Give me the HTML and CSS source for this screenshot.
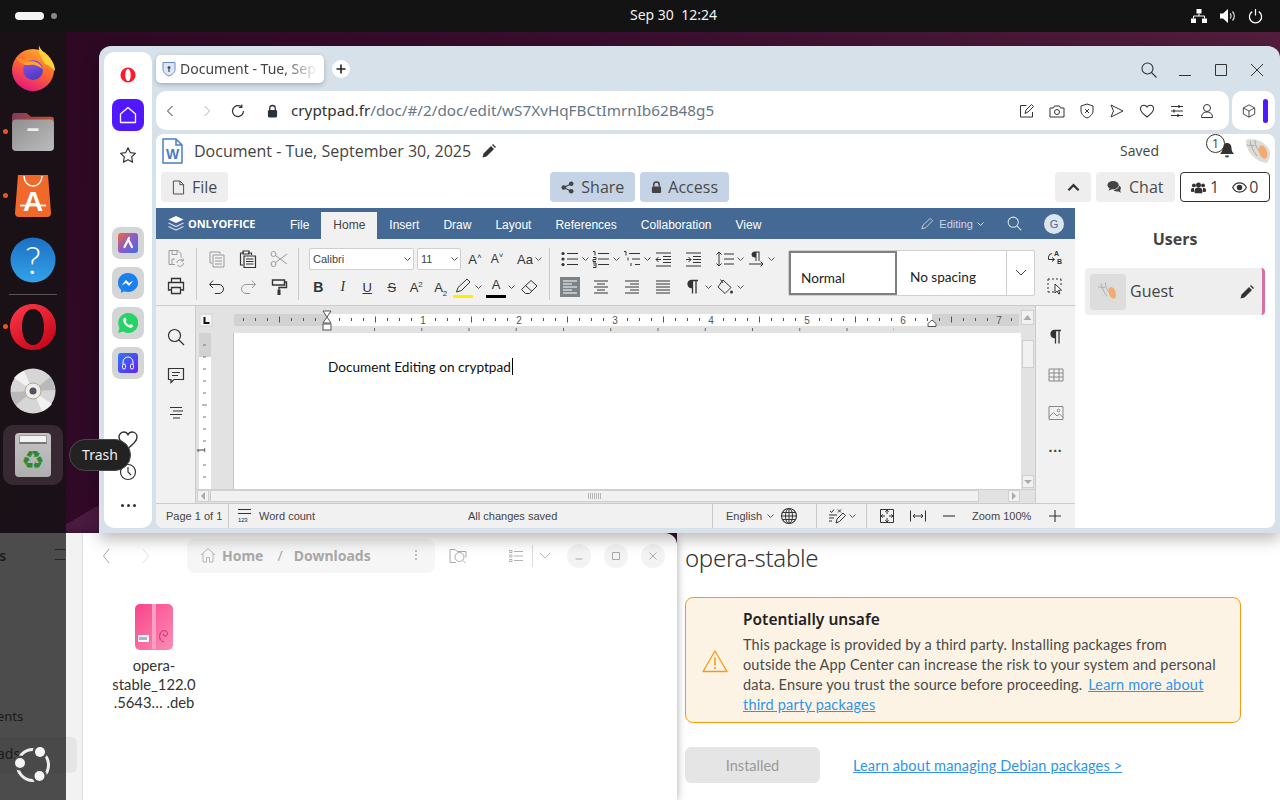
FILE: index.html
```html
<!DOCTYPE html>
<html lang="en">
<head>
<meta charset="utf-8">
<title>Desktop</title>
<link rel="stylesheet" href="styles.css">
</head>
<body>
<svg class="defs" width="0" height="0" aria-hidden="true">
  <defs>
    <linearGradient id="ffBase" x1="0.8" y1="0" x2="0.3" y2="1"><stop offset="0" stop-color="#ffb52e"/><stop offset=".45" stop-color="#ff6a2e"/><stop offset="1" stop-color="#e5157f"/></linearGradient>
    <linearGradient id="ffBall" x1="0.3" y1="0" x2="0.7" y2="1"><stop offset="0" stop-color="#9a4fe0"/><stop offset="1" stop-color="#3f3bc4"/></linearGradient>
    <linearGradient id="folderB" x1="0" y1="0" x2="1" y2="0"><stop offset="0" stop-color="#7f3a5c"/><stop offset="1" stop-color="#c9532a"/></linearGradient>
    <linearGradient id="folderF" x1="0" y1="0" x2="1" y2="1"><stop offset="0" stop-color="#8f8f8f"/><stop offset="1" stop-color="#bcbcbc"/></linearGradient>
    <linearGradient id="helpG" x1="0" y1="0" x2="0" y2="1"><stop offset="0" stop-color="#1d6fc4"/><stop offset="1" stop-color="#32a3e8"/></linearGradient>
    <linearGradient id="opG" x1="0" y1="0" x2="0.6" y2="1"><stop offset="0" stop-color="#ff3b4a"/><stop offset="1" stop-color="#c8081c"/></linearGradient>
    <linearGradient id="debG" x1="0" y1="0" x2="1" y2="1"><stop offset="0" stop-color="#f8448a"/><stop offset="1" stop-color="#fb8db5"/></linearGradient>
    <linearGradient id="aiG" x1="0" y1="0" x2="1" y2="1"><stop offset="0" stop-color="#f0683a"/><stop offset=".5" stop-color="#8c5bc8"/><stop offset="1" stop-color="#3c6fe0"/></linearGradient>
    <linearGradient id="musG" x1="0" y1="0" x2="1" y2="1"><stop offset="0" stop-color="#2d7bf5"/><stop offset="1" stop-color="#6a1ff0"/></linearGradient>
    <symbol id="chev" viewBox="0 0 11 22"><path d="M2.500 9.500 5.500 12.500 8.500 9.500" fill="none" stroke="currentColor" stroke-width="1"/></symbol>
    <symbol id="save" viewBox="0 0 20 20"><path d="M3 2.500h9l3 3v4M3 2.500v14h6M6 2.500v4h5v-4M6 16v-5h3" fill="none" stroke="currentColor"/><path d="M11 15a3.500 3.500 0 0 1 6-2.300M17.500 15a3.500 3.500 0 0 1-6 2.300M17.300 10.500v2.500h-2.500" fill="none" stroke="currentColor"/></symbol>
    <symbol id="print" viewBox="0 0 20 20"><path d="M5.500 6V2.500h9V6M5.500 14h-3V6.500h15V14h-3M5.500 11.500h9v6h-9z" fill="none" stroke="currentColor" stroke-width="1.300"/></symbol>
    <symbol id="copy" viewBox="0 0 20 20"><path d="M3 3h10v2M3 3v11h2M6 6h11v12H6zM8 9h7M8 12h7M8 15h7" fill="none" stroke="currentColor"/></symbol>
    <symbol id="paste" viewBox="0 0 20 20"><path d="M6 4H2.500v12H5M10 4h3.500v2M5 2h6v3H5zM6 7h11.500v11.500H6zM8 10h7.500M8 12.500h7.500M8 15h7.500" fill="none" stroke="currentColor" stroke-width="1.200"/></symbol>
    <symbol id="cut" viewBox="0 0 20 20"><circle cx="4.500" cy="5" r="2.500" fill="none" stroke="currentColor"/><circle cx="4.500" cy="15" r="2.500" fill="none" stroke="currentColor"/><path d="M6.500 6.500 18 15M6.500 13.500 18 5" fill="none" stroke="currentColor"/></symbol>
    <symbol id="undo" viewBox="0 0 20 20"><path d="M6 3.500 2.500 7.500 6 11M3 7.500h9a4.500 4.500 0 0 1 0 9H8" fill="none" stroke="currentColor"/></symbol>
    <symbol id="redo" viewBox="0 0 20 20"><path d="M14 3.500 17.500 7.500 14 11M17 7.500H8a4.500 4.500 0 0 0 0 9h4" fill="none" stroke="currentColor"/></symbol>
    <symbol id="roller" viewBox="0 0 20 20"><path d="M3.500 3h12v5h-12zM15.500 5h2v5.500H10v2" fill="none" stroke="currentColor" stroke-width="1.400"/><path d="M8.500 12.500h3V18h-3z" fill="currentColor"/></symbol>
    <symbol id="ul" viewBox="0 0 20 20"><g stroke="currentColor"><path d="M7 4.500h11M7 10h11M7 15.500h11"/></g><circle cx="3" cy="4.500" r="1.600" fill="currentColor"/><circle cx="3" cy="10" r="1.600" fill="currentColor"/><circle cx="3" cy="15.500" r="1.600" fill="currentColor"/></symbol>
    <symbol id="ol" viewBox="0 0 20 20"><path d="M7 4.500h11M7 10h11M7 15.500h11M2 2.500h2v4M2 8.500h3v2H2v2h3M2 14h3v4.500H2M2.500 16h2" fill="none" stroke="currentColor"/></symbol>
    <symbol id="ml" viewBox="0 0 20 20"><path d="M7 4.500h11M10 10h8M13 15.500h5M2 2.500h2v4M6 8.500v3M9 14v3" fill="none" stroke="currentColor"/></symbol>
    <symbol id="ind1" viewBox="0 0 20 20"><path d="M3 4h15M10 7.500h8M10 10.500h8M10 13.500h8M3 17h15M8 10.500H3M5.500 8 3 10.500 5.500 13" fill="none" stroke="currentColor"/></symbol>
    <symbol id="ind2" viewBox="0 0 20 20"><path d="M3 4h15M10 7.500h8M10 10.500h8M10 13.500h8M3 17h15M3 10.500h5M5.500 8 8 10.500 5.500 13" fill="none" stroke="currentColor"/></symbol>
    <symbol id="ls" viewBox="0 0 20 20"><path d="M4 3v14M1.500 5.500 4 3l2.500 2.500M1.500 14.500 4 17l2.500-2.500M9 5h10M9 10h10M9 15h10" fill="none" stroke="currentColor"/></symbol>
    <symbol id="pdir" viewBox="0 0 20 20"><path d="M10 3v9M13 3v9M13.500 3H8.500a2.500 2.500 0 0 0 0 5H10" fill="none" stroke="currentColor"/><path d="M8.500 3a2.500 2.500 0 0 0 0 5H10V3z" fill="currentColor"/><path d="M3 15h14M14.500 12.500 17 15l-2.500 2.500" fill="none" stroke="currentColor"/></symbol>
    <symbol id="al" viewBox="0 0 20 20"><path d="M3 4h14M3 7h9M3 10h14M3 13h9M3 16h14" fill="none" stroke="currentColor"/></symbol>
    <symbol id="ac" viewBox="0 0 20 20"><path d="M3 4h14M6 7h8M3 10h14M6 13h8M3 16h14" fill="none" stroke="currentColor"/></symbol>
    <symbol id="ar" viewBox="0 0 20 20"><path d="M3 4h14M8 7h9M3 10h14M8 13h9M3 16h14" fill="none" stroke="currentColor"/></symbol>
    <symbol id="aj" viewBox="0 0 20 20"><path d="M3 4h14M3 7h14M3 10h14M3 13h14M3 16h14" fill="none" stroke="currentColor"/></symbol>
    <symbol id="pil" viewBox="0 0 20 20"><path d="M9.500 3.500v13M13 3.500v13M15 3.500H8.500a3.500 3.500 0 0 0 0 7h1" fill="none" stroke="currentColor" stroke-width="1.300"/><path d="M8.500 3.500a3.500 3.500 0 0 0 0 7h1v-7z" fill="currentColor"/></symbol>
    <symbol id="fill" viewBox="0 0 20 20"><path d="M8 3 16 10.500 10 16.500 3 10z" fill="none" stroke="currentColor"/><path d="M5.500 2.500 8 6" fill="none" stroke="currentColor"/><circle cx="16.500" cy="15" r="1.500" fill="currentColor"/></symbol>
    <symbol id="eraser" viewBox="0 0 20 20"><path d="M12 3.500 18 9 10.500 16.500H6.500L2.500 12.500zM6.500 8.500l6.500 6" fill="none" stroke="currentColor"/></symbol>
    <symbol id="pen" viewBox="0 0 20 20"><path d="M3.500 16 5 11.500 14 3l3 3-8.500 8.500z" fill="none" stroke="currentColor"/></symbol>
    <symbol id="replace" viewBox="0 0 20 20"><path d="M7 5.500a4 4 0 0 0-3.500 3.500v2.500h6M7 9.500l2.500 2-2.500 2" fill="none" stroke="currentColor"/><text x="9" y="7.500" class="sm-l">A</text><text x="12" y="16" class="sm-l">B</text></symbol>
    <symbol id="sel" viewBox="0 0 20 20"><path d="M3 3h13M3 3v13M3 16h6M16 3v6" fill="none" stroke="currentColor" stroke-dasharray="2 2"/><path d="M10 8v9l2.200-2 1.500 3 1.300-.6-1.500-3 3-.3z" fill="#fff" stroke="currentColor"/></symbol>
    <symbol id="search" viewBox="0 0 20 20"><circle cx="8.500" cy="8.500" r="6" fill="none" stroke="currentColor" stroke-width="1.200"/><path d="M13 13l5 5" stroke="currentColor" stroke-width="1.200"/></symbol>
    <symbol id="comment" viewBox="0 0 20 20"><path d="M2.500 3.500h15v11H8L5 17.500v-3H2.500zM6 7.500h8M6 10.500h6" fill="none" stroke="currentColor" stroke-width="1.200"/></symbol>
    <symbol id="nav" viewBox="0 0 20 20"><path d="M4 4.500h12M7 8h10M4 11.500h12M7 15h7" fill="none" stroke="currentColor" stroke-width="1.200"/></symbol>
    <symbol id="table" viewBox="0 0 20 20"><path d="M3 4h14v12H3zM3 8h14M3 12h14M8 4v12M13 4v12" fill="none" stroke="currentColor"/></symbol>
    <symbol id="image" viewBox="0 0 20 20"><path d="M3 3.500h14v13H3zM3 14l4.500-4.500 3.500 3.500 2.500-2 3.500 3.500" fill="none" stroke="currentColor"/><circle cx="12.500" cy="7.500" r="1.300" fill="none" stroke="currentColor"/></symbol>
    <symbol id="heart" viewBox="0 0 20 20"><path d="M10 17.500C4.500 13.500 1.800 10.700 1.800 7.300 1.800 4.600 3.900 2.800 6.200 2.800c1.600 0 3 .8 3.800 2.300.8-1.500 2.200-2.300 3.800-2.300 2.300 0 4.400 1.800 4.400 4.500 0 3.400-2.700 6.200-8.200 10.200z" fill="none" stroke="#333" stroke-width="1.300"/></symbol>
    <symbol id="globe" viewBox="0 0 20 20"><circle cx="10" cy="10" r="7.500" fill="none" stroke="currentColor" stroke-width="1.100"/><ellipse cx="10" cy="10" rx="3.500" ry="7.500" fill="none" stroke="currentColor"/><path d="M2.500 10h15M3.500 6.500h13M3.500 13.500h13M10 2.500v15" fill="none" stroke="currentColor"/></symbol>
    <symbol id="track" viewBox="0 0 20 20"><path d="M2 9h8M2 12h5M2 15h3M3 5l1.500 1.500L7 3.500M11 3.500l3 3M14 3.500l-3 3M9 17l1-4 6-6 2.500 2.500-6 6z" fill="none" stroke="currentColor"/></symbol>
    <symbol id="fit" viewBox="0 0 20 20"><path d="M3.500 3.500h13v13h-13zM10 4v4M8.300 5.700 10 4l1.700 1.700M10 16v-4M8.300 14.300 10 16l1.700-1.700M4 10h4M5.700 8.300 4 10l1.700 1.700M16 10h-4M14.300 8.300 16 10l-1.700 1.700" fill="none" stroke="currentColor"/></symbol>
    <symbol id="fitw" viewBox="0 0 20 20"><path d="M2.500 4.500v11M17.500 4.500v11M5 10h10M7 8l-2 2 2 2M13 8l2 2-2 2" fill="none" stroke="currentColor"/></symbol>
    <symbol id="minus" viewBox="0 0 20 20"><path d="M4 10h12" stroke="currentColor" stroke-width="1.100"/></symbol>
    <symbol id="plus" viewBox="0 0 20 20"><path d="M4 10h12M10 4v12" stroke="currentColor" stroke-width="1.100"/></symbol>
    <symbol id="shell" viewBox="0 0 28 28"><path d="M2 3C8 0 20 3 25 12c2 5 1 10-2 14-5 0-13-4-17-10C3 12 2 7 2 3z" fill="#dcdcd8"/><path d="M6 4c1 5 3 10 7 15M11 3c0 5 2 9 5 12M2.500 8c3 .5 5 1 8 .5" fill="none" stroke="#a8aaa6"/><ellipse cx="19" cy="15" rx="4" ry="7" transform="rotate(-20 19 15)" fill="#f4ab72"/></symbol>
  </defs>
</svg>

<header class="topbar">
  <div class="activities"><span class="pill"></span><span class="wsdot"></span></div>
  <div class="clock">Sep 30&nbsp;&nbsp;12:24</div>
  <div class="tray">
    <svg class="tray-net" viewBox="0 0 16 14" width="16" height="14"><path d="M5.500 0h5v4.500h-5zM0 9.500h5V14H0zM11 9.500h5V14h-5z" fill="#fff"/><path d="M8 4.500v2.500M2.500 9.500V7h11v2.500" fill="none" stroke="#fff"/></svg>
    <svg class="tray-vol" viewBox="0 0 16 14" width="16" height="14"><path d="M0 4.500h3L8 0v14L3 9.500H0z" fill="#fff"/><path d="M10 4.500a3.500 3.500 0 0 1 0 5M12.500 2.500a6.500 6.500 0 0 1 0 9" fill="none" stroke="#ddd" stroke-width="1.200"/></svg>
    <svg class="tray-pow" viewBox="0 0 16 16" width="15" height="15"><path d="M4.500 2.800a6.500 6.500 0 1 0 7 0M8 0v7" fill="none" stroke="#fff" stroke-width="1.300"/></svg>
  </div>
</header>

<main class="desktop">
  <!-- App Center -->
  <section class="appcenter">
    <h1 class="ac-title">opera-stable</h1>
    <div class="warning">
      <svg class="warn-icon" viewBox="0 0 26 24" width="26" height="24"><path d="M13 2 1 22.500h24z" fill="none" stroke="#f99b11" stroke-width="1.300" stroke-linejoin="round"/><path d="M13 8.500v8M13 18v2" stroke="#f99b11" stroke-width="1.600"/></svg>
      <div class="warn-body">
        <h2 class="warn-title">Potentially unsafe</h2>
        <p class="warn-text">This package is provided by a third party. Installing packages from<br>outside the App Center can increase the risk to your system and personal<br>data. Ensure you trust the source before proceeding. <a class="lnk lnk-in">Learn more about<br>third party packages</a></p>
      </div>
    </div>
    <div class="ac-actions">
      <button class="installed">Installed</button>
      <a class="lnk ac-link">Learn about managing Debian packages &gt;</a>
    </div>
  </section>

  <!-- Files -->
  <section class="files">
    <aside class="f-side">
      <div class="f-side-top"><span class="f-es">es</span><span class="f-burger"></span></div>
      <div class="f-side-ents">ents</div>
      <div class="f-side-sel">ads</div>
    </aside>
    <div class="f-main">
      <div class="f-head">
        <svg class="f-back" viewBox="0 0 8 16" width="8" height="16"><path d="M7 1 1.500 8 7 15" fill="none" stroke="#a5a5a5"/></svg>
        <svg class="f-fwd" viewBox="0 0 8 16" width="8" height="16"><path d="M1 1 6.500 8 1 15" fill="none" stroke="#e3e3e3"/></svg>
        <div class="f-path">
          <svg viewBox="0 0 16 16" width="16" height="16"><path d="M1 8 8 1.500 15 8M3 6.500V15h3.500v-4.500h3V15H13V6.500" fill="none" stroke="#b4b4b4"/></svg>
          <span class="f-home">Home</span><span class="f-slash">/</span><span class="f-dl">Downloads</span>
          <span class="f-kebab"></span>
        </div>
        <svg class="f-find" viewBox="0 0 18 16" width="18" height="16"><path d="M1 14.500V1.500h5l2 2h9v6M7 14.500H1" fill="none" stroke="#a9a9a9"/><circle cx="10.500" cy="9" r="4.500" fill="none" stroke="#a9a9a9"/><path d="m14 12.500 2.500 2.500" stroke="#a9a9a9"/></svg>
        <svg class="f-list" viewBox="0 0 14 12" width="14" height="12"><path d="M0 .5h3v2H0zM0 5h3v2H0zM0 9.500h3v2H0zM5 1.500h9M5 6h9M5 10.500h9" fill="none" stroke="#b4b4b4"/></svg>
        <span class="f-sep"></span>
        <svg class="f-dd" viewBox="0 0 12 8" width="12" height="8"><path d="M1 1l5 5 5-5" fill="none" stroke="#b4b4b4"/></svg>
        <span class="f-wbtn"><svg viewBox="0 0 10 10" width="10" height="10"><path d="M1.500 8h7" stroke="#aaa"/></svg></span>
        <span class="f-wbtn"><svg viewBox="0 0 10 10" width="10" height="10"><path d="M1.500 1.500h7v7h-7z" fill="none" stroke="#aaa"/></svg></span>
        <span class="f-wbtn"><svg viewBox="0 0 10 10" width="10" height="10"><path d="M1.500 1.500l7 7M8.500 1.500l-7 7" stroke="#aaa"/></svg></span>
      </div>
      <figure class="f-file">
        <svg viewBox="0 0 38 46" width="38" height="46"><rect x="0" y="0" width="38" height="46" rx="5" fill="url(#debG)"/><rect x="17" y="0" width="4" height="45" fill="#fba0c2"/><rect x="3" y="31" width="11" height="7" fill="#fff"/><path d="M5 33v3M7 33v3M9 33v3M11 33v3" stroke="#666"/><path d="M29 38c-4-1-5-4-4-8 1-3 4-4 6-3 2 1 2 4 0 5-1.500.5-3-.5-2.500-2" fill="none" stroke="#d8256b"/></svg>
        <figcaption>opera-<br>stable_122.0<br>.5643… .deb</figcaption>
      </figure>
    </div>
  </section>

  <!-- Opera window -->
  <section class="opera">
    <nav class="op-side">
      <svg class="op-logo" viewBox="0 0 18 18" width="16" height="16"><path fill-rule="evenodd" d="M9 .5a8.500 8.500 0 1 0 0 17 8.500 8.500 0 0 0 0-17zM9 2.200c-2 0-3 3-3 6.800s1 6.800 3 6.800 3-3 3-6.800-1-6.800-3-6.800z" fill="#ff1b2d"/></svg>
      <span class="op-home"><svg viewBox="0 0 20 20" width="20" height="20"><path d="M10 2.500 17.500 9v8.500h-15V9z" fill="none" stroke="#fff" stroke-width="1.300" stroke-linejoin="round"/></svg></span>
      <svg class="op-star" viewBox="0 0 20 20" width="18" height="18"><path d="m10 2 2.500 5.300 5.700.8-4.100 4 1 5.800-5.100-2.700-5.100 2.700 1-5.800-4.100-4 5.700-.8z" fill="none" stroke="#333" stroke-width="1.300" stroke-linejoin="round"/></svg>
      <span class="op-tile first"><svg viewBox="0 0 20 20" width="20" height="20"><rect width="20" height="20" rx="3" fill="url(#aiG)"/><path d="M11 5 6.500 14M11 8l3 6" stroke="#fff" stroke-width="2.200" stroke-linecap="round"/></svg></span>
      <span class="op-tile"><svg viewBox="0 0 20 20" width="20" height="20"><path d="M10 0C4.400 0 0 4.200 0 9.700c0 2.900 1.200 5.400 3.100 7.100V20l3-1.700c1.200.4 2.500.6 3.900.6 5.600 0 10-4 10-9.200C20 4.200 15.600 0 10 0z" fill="#1b7ff0"/><path d="m3.500 12.500 4.500-5.500 3 3 4.500-2.500-4.500 5.500-3-3z" fill="#fff"/></svg></span>
      <span class="op-tile"><svg viewBox="0 0 20 20" width="20" height="20"><path d="M10 0a10 10 0 0 0-8.500 15L0 20l5.200-1.400A10 10 0 1 0 10 0z" fill="#25d366"/><path d="M6 5c1-1 1.700-.5 2.200 1l.3 1c0 .5-.8 1-.8 1.500.5 1.500 2 3 3.500 3.500.5 0 1-.8 1.500-.8l1 .4c1.500.5 2 1.200 1 2.200-1.500 1.500-4.500 1-7-1.500S4.500 6.500 6 5z" fill="#fff"/></svg></span>
      <span class="op-tile"><svg viewBox="0 0 20 20" width="20" height="20"><rect width="20" height="20" rx="3" fill="url(#musG)"/><path d="M5 11V9a5 5 0 0 1 10 0v2" fill="none" stroke="#fff"/><rect x="4.500" y="11" width="3" height="5" rx="1.500" fill="none" stroke="#fff"/><rect x="12.500" y="11" width="3" height="5" rx="1.500" fill="none" stroke="#fff"/></svg></span>
      <svg class="op-heart"><use href="#heart"/></svg>
      <svg class="op-clock" viewBox="0 0 18 18" width="18" height="18"><circle cx="9" cy="9" r="7.500" fill="none" stroke="#333" stroke-width="1.200"/><path d="M9 4v5l3 3" fill="none" stroke="#333" stroke-width="1.200"/></svg>
      <span class="op-more"></span>
    </nav>
    <div class="op-main">
      <div class="tabbar">
        <div class="tab">
          <svg viewBox="0 0 14 16" width="14" height="16"><path d="M1 1.500h12v7c0 3-3 5.500-6 6.500-3-1-6-3.500-6-6.500z" fill="#dce6f5" stroke="#6a8ac8"/><circle cx="7" cy="6.500" r="1.500" fill="#456"/><path d="M7 7v4" stroke="#456" stroke-width="1.300"/></svg>
          <span class="tab-title">Document - Tue, September 30, 2025</span>
        </div>
        <span class="tab-plus"><svg viewBox="0 0 10 10" width="10" height="10"><path d="M5 0.500v9M0.500 5h9" stroke="#222" stroke-width="1.600"/></svg></span>
        <div class="winctl">
          <svg class="wc" viewBox="0 0 16 16" width="16" height="16"><circle cx="6.500" cy="6.500" r="5.500" fill="none" stroke="#333" stroke-width="1.100"/><path d="m10.500 10.500 5 5" stroke="#333" stroke-width="1.100"/></svg>
          <svg class="wc" viewBox="0 0 16 16" width="16" height="16"><path d="M2 13.500h12" stroke="#333"/></svg>
          <svg class="wc" viewBox="0 0 16 16" width="16" height="16"><path d="M2.500 2.500h11v11h-11z" fill="none" stroke="#333"/></svg>
          <svg class="wc" viewBox="0 0 16 16" width="16" height="16"><path d="m2 2 12 12M14 2 2 14" stroke="#333"/></svg>
        </div>
      </div>
      <div class="addrrow">
        <div class="addr">
          <svg class="nav-back" viewBox="0 0 8 12" width="8" height="12"><path d="M6.500 1 1.500 6l5 5" fill="none" stroke="#333"/></svg>
          <svg class="nav-fwd" viewBox="0 0 8 12" width="8" height="12"><path d="M1.500 1l5 5-5 5" fill="none" stroke="#b5b5b5"/></svg>
          <svg class="nav-rel" viewBox="0 0 14 14" width="14" height="14"><path d="M12.500 7A5.500 5.500 0 1 1 10.500 2.800M10.800 0.500v3h-3" fill="none" stroke="#333" stroke-width="1.200"/></svg>
          <svg class="nav-lock" viewBox="0 0 12 14" width="11" height="14"><path d="M3 6V4a3 3 0 0 1 6 0v2" fill="none" stroke="#29323c" stroke-width="1.400"/><rect x="1" y="6" width="10" height="8" rx="1.500" fill="#29323c"/></svg>
          <span class="url"><span class="url-host">cryptpad.fr</span>/doc/#/2/doc/edit/wS7XvHqFBCtImrnIb62B48g5</span>
          <div class="addr-icons">
            <svg viewBox="0 0 16 16"><path d="M13.500 9v5h-12V2.500h6M6 10.500 7 7l5.500-5.500 2 2L9 9z" fill="none" stroke="#333"/></svg>
            <svg viewBox="0 0 16 16"><path d="M1 5h3.500l1-2h5l1 2H15v9H1z" fill="none" stroke="#333" stroke-linejoin="round"/><circle cx="8" cy="9" r="2.500" fill="none" stroke="#333"/></svg>
            <svg viewBox="0 0 16 16"><path d="M8 1l6 2v5c0 3-3 6-6 7-3-1-6-4-6-7V3z" fill="none" stroke="#333"/><path d="m6 6 4 4M10 6l-4 4" stroke="#333"/></svg>
            <svg viewBox="0 0 16 16"><path d="M2 2l12 6-12 6 2.500-6z" fill="none" stroke="#333" stroke-linejoin="round"/></svg>
            <svg viewBox="0 0 20 20"><use href="#heart"/></svg>
            <svg viewBox="0 0 16 16"><path d="M2 3.500h12M2 8h12M2 12.500h12" stroke="#333"/><path d="M10 2v3M5 6.500v3M9 11v3" stroke="#333" stroke-width="1.300"/></svg>
            <svg viewBox="0 0 16 16"><circle cx="8" cy="5" r="3.500" fill="none" stroke="#333"/><path d="M2.500 14.500c0-4 2.500-5.500 5.500-5.500s5.500 1.500 5.500 5.500z" fill="none" stroke="#333"/></svg>
          </div>
        </div>
        <div class="extbox">
          <svg viewBox="0 0 16 16" width="14" height="14"><path d="M8 1l6.500 3.500v7L8 15l-6.500-3.500v-7zM1.500 4.500 8 8l6.500-3.500M8 8v7" fill="none" stroke="#333" stroke-linejoin="round"/></svg>
          <span class="extbar"></span>
        </div>
      </div>

      <div class="page">
        <div class="cp-title">
          <svg class="cp-doc" viewBox="0 0 21 26" width="21" height="26"><path d="M1 1h13l6 6v18H1z" fill="#fff" stroke="#4a7cc4" stroke-width="1.500" stroke-linejoin="round"/><path d="M14 1v6h6" fill="none" stroke="#4a7cc4" stroke-width="1.500"/><text x="10.500" y="21" text-anchor="middle" class="cp-w">W</text></svg>
          <span class="cp-name">Document - Tue, September 30, 2025</span>
          <svg class="cp-pencil" viewBox="0 0 14 14" width="14" height="14"><path d="M0.500 13.500 1.500 9.500 9 2l3 3-7.500 7.500zM10 1l1-1 3 3-1 1z" fill="#333"/></svg>
          <span class="cp-saved">Saved</span>
          <span class="cp-bell">
            <svg viewBox="0 0 16 16" width="16" height="16"><path d="M8 1c3 0 4.500 2.500 4.500 5 0 3 1 4.500 2.500 6H1c1.500-1.500 2.500-3 2.500-6C3.500 3.500 5 1 8 1zM6 13.500h4a2 2 0 0 1-4 0z" fill="#333"/></svg>
            <span class="cp-badge">1</span>
          </span>
          <svg class="cp-avatar"><use href="#shell"/></svg>
        </div>
        <div class="cp-tools">
          <button class="btn"><svg viewBox="0 0 14 16" width="13" height="15"><path d="M1.500 1h7l4 4v10h-11zM8.500 1v4h4" fill="none" stroke="#444"/></svg>File</button>
          <button class="btn blue share"><svg viewBox="0 0 14 14" width="13" height="13"><circle cx="11" cy="3" r="2.500" fill="#444"/><circle cx="11" cy="11" r="2.500" fill="#444"/><circle cx="3" cy="7" r="2.500" fill="#444"/><path d="M3 7l8-4M3 7l8 4" stroke="#444" stroke-width="1.300"/></svg>Share</button>
          <button class="btn blue access"><svg viewBox="0 0 12 14" width="11" height="13"><path d="M3 6V4a3 3 0 0 1 6 0v2" fill="none" stroke="#444" stroke-width="1.600"/><rect x="1" y="6" width="10" height="7" rx="1" fill="#444"/></svg>Access</button>
          <button class="btn up"><svg viewBox="0 0 14 9" width="13" height="9"><path d="M1.500 7.500 7 2l5.500 5.500" fill="none" stroke="#333" stroke-width="2.400"/></svg></button>
          <button class="btn chat"><svg viewBox="0 0 16 14" width="15" height="14"><ellipse cx="6.500" cy="5" rx="6" ry="4.500" fill="#444"/><path d="M3 8 1.500 11 6 9z" fill="#444"/><path d="M13 5.500c2 1 2.500 3.500 1 5l.8 2.500-3-1.500c-2 .5-4 0-5-1.500 3 0 6-1.500 6.200-4.500z" fill="#444"/></svg>Chat</button>
          <div class="users">
            <svg viewBox="0 0 18 14" width="15" height="13"><circle cx="9" cy="4" r="3" fill="#333"/><circle cx="3.500" cy="4.500" r="2.300" fill="#333"/><circle cx="14.500" cy="4.500" r="2.300" fill="#333"/><path d="M4.500 14V10c0-2 2-3 4.500-3s4.500 1 4.500 3v4zM0 12V9.500C0 8 1.500 7.500 3.500 7.500l.5 5zM18 12V9.500c0-1.500-1.500-2-3.500-2l-.5 5z" fill="#333"/></svg>
            <span>1</span>
            <svg class="u-eye" viewBox="0 0 16 12" width="15" height="11"><path d="M.5 6C2 3 5 1 8 1s6 2 7.500 5C14 9 11 11 8 11S2 9 .5 6z" fill="none" stroke="#333" stroke-width="1.200"/><circle cx="8" cy="6" r="3" fill="#333"/></svg>
            <span>0</span>
          </div>
        </div>
        <div class="cp-body">
          <div class="oo">
            <div class="oo-head">
              <svg class="oo-logo" viewBox="0 0 16 15" width="16" height="15"><path d="M8 0l7.500 3.500L8 7 .5 3.500z" fill="#fff"/><path d="M.5 7 8 10.500 15.500 7M.5 10.500 8 14l7.500-3.500" fill="none" stroke="#cfd9e5" stroke-width="1.300"/></svg>
              <span class="oo-brand">ONLYOFFICE</span>
              <span class="oo-tab t-file">File</span>
              <span class="oo-tab active">Home</span>
              <span class="oo-tab">Insert</span>
              <span class="oo-tab">Draw</span>
              <span class="oo-tab">Layout</span>
              <span class="oo-tab">References</span>
              <span class="oo-tab">Collaboration</span>
              <span class="oo-tab">View</span>
              <svg class="oo-pen"><use href="#pen"/></svg>
              <span class="oo-editing">Editing</span>
              <svg class="cv w-chev"><use href="#chev"/></svg>
              <svg class="oo-search"><use href="#search"/></svg>
              <span class="oo-user">G</span>
            </div>

            <div class="oo-bar">
              <div class="g g-a">
                <svg class="i dis"><use href="#save"/></svg>
                <svg class="i"><use href="#print"/></svg>
              </div>
              <div class="g g-b">
                <svg class="i dis"><use href="#copy"/></svg>
                <svg class="i"><use href="#paste"/></svg>
                <svg class="i dis"><use href="#cut"/></svg>
                <svg class="i"><use href="#undo"/></svg>
                <svg class="i dis"><use href="#redo"/></svg>
                <svg class="i"><use href="#roller"/></svg>
              </div>
              <div class="g g-c">
                <div class="row row1">
                  <span class="combo c-font">Calibri<svg class="cv"><use href="#chev"/></svg></span>
                  <span class="combo c-size">11<svg class="cv"><use href="#chev"/></svg></span>
                  <span class="tx tx-a">A<sup>˄</sup></span>
                  <span class="tx tx-a small">A<sup>˅</sup></span>
                  <span class="tx tx-a case">Aa</span>
                  <svg class="cv"><use href="#chev"/></svg>
                </div>
                <div class="row row2">
                  <span class="tx cell bold">B</span>
                  <span class="tx cell ital">I</span>
                  <span class="tx cell under">U</span>
                  <span class="tx cell strike">S</span>
                  <span class="tx cell">A<sup>2</sup></span>
                  <span class="tx cell">A<sub>2</sub></span>
                  <span class="hl"><svg class="i"><use href="#pen"/></svg></span>
                  <svg class="cv"><use href="#chev"/></svg>
                  <span class="tx fc">A</span>
                  <svg class="cv"><use href="#chev"/></svg>
                  <svg class="i erase"><use href="#eraser"/></svg>
                </div>
              </div>
              <div class="g g-d">
                <svg class="i"><use href="#ul"/></svg><svg class="cv"><use href="#chev"/></svg>
                <svg class="i"><use href="#ol"/></svg><svg class="cv"><use href="#chev"/></svg>
                <svg class="i"><use href="#ml"/></svg><svg class="cv"><use href="#chev"/></svg>
                <svg class="i"><use href="#ind1"/></svg><span></span>
                <svg class="i"><use href="#ind2"/></svg><span></span>
                <svg class="i"><use href="#ls"/></svg><svg class="cv"><use href="#chev"/></svg>
                <svg class="i"><use href="#pdir"/></svg><svg class="cv"><use href="#chev"/></svg>

                <span class="al-on"><svg class="i"><use href="#al"/></svg></span><span></span>
                <svg class="i"><use href="#ac"/></svg><span></span>
                <svg class="i"><use href="#ar"/></svg><span></span>
                <svg class="i"><use href="#aj"/></svg><span></span>
                <svg class="i"><use href="#pil"/></svg><svg class="cv"><use href="#chev"/></svg>
                <svg class="i"><use href="#fill"/></svg><svg class="cv"><use href="#chev"/></svg>
              </div>
              <div class="styles">
                <span class="st on">Normal</span>
                <span class="st">No spacing</span>
                <span class="st-more"><svg viewBox="0 0 12 8" width="12" height="8"><path d="M1 1l5 5 5-5" fill="none" stroke="#444"/></svg></span>
              </div>
              <div class="g g-e">
                <svg class="i"><use href="#replace"/></svg>
                <svg class="i"><use href="#sel"/></svg>
              </div>
            </div>

            <div class="oo-main">
              <div class="rail">
                <svg class="i"><use href="#search"/></svg>
                <svg class="i"><use href="#comment"/></svg>
                <svg class="i"><use href="#nav"/></svg>
              </div>
              <div class="work">
                <svg class="ruler" width="839" height="27" viewBox="0 0 839 27">
                  <defs>
                    <pattern id="rt" patternUnits="userSpaceOnUse" x="132" y="8" width="96" height="12"><path d="M12.500 4v3M24.500 4v3M36.500 4v3M48.500 2.500v6M60.500 4v3M72.500 4v3M84.500 4v3" stroke="#555"/></pattern>
                    <pattern id="tt" patternUnits="userSpaceOnUse" x="179" y="20" width="47.250" height="7"><path d="M.5 2v3" stroke="#666"/></pattern>
                  </defs>
                  <rect x="5" y="8" width="12" height="12" fill="#f5f5f5" stroke="#cfcfcf"/>
                  <path d="M9.500 11v6h5" fill="none" stroke="#111" stroke-width="2"/>
                  <rect x="39" y="8" width="93" height="12" fill="#d2d2d2"/>
                  <rect x="132" y="8" width="605" height="12" fill="#fff"/>
                  <rect x="737" y="8" width="87" height="12" fill="#d2d2d2"/>
                  <rect x="39" y="8" width="785" height="12" fill="url(#rt)"/>
                  <rect x="179" y="20" width="520" height="7" fill="url(#tt)"/>
                  <g class="rn"><rect x="222" y="9" width="12" height="10" fill="#fff"/><text x="228" y="17.500">1</text><rect x="318" y="9" width="12" height="10" fill="#fff"/><text x="324" y="17.500">2</text><rect x="414" y="9" width="12" height="10" fill="#fff"/><text x="420" y="17.500">3</text><rect x="510" y="9" width="12" height="10" fill="#fff"/><text x="516" y="17.500">4</text><rect x="606" y="9" width="12" height="10" fill="#fff"/><text x="612" y="17.500">5</text><rect x="702" y="9" width="12" height="10" fill="#fff"/><text x="708" y="17.500">6</text><rect x="798" y="9" width="12" height="10" fill="#d2d2d2"/><text x="804" y="17.500">7</text></g>
                  <path d="M128 5h8l-4 6 4 6h-8l4-6z" fill="#fff" stroke="#555"/>
                  <rect x="128" y="18" width="8" height="6" fill="#fff" stroke="#555"/>
                  <path d="M737 14l4 3.500v3h-8v-3z" fill="#fff" stroke="#555"/>
                  <rect x="826.500" y="4.500" width="12" height="14" fill="#f1f1f1" stroke="#d0d0d0"/>
                  <path d="M832.500 9l4 5h-8z" fill="#aaa"/>
                </svg>
                <div class="work-mid">
                  <svg class="vruler" width="16" height="156" viewBox="0 0 16 156">
                    <rect x="3" width="12" height="24" fill="#d2d2d2"/>
                    <rect x="3" y="24" width="12" height="132" fill="#fff"/>
                    <path d="M7 12h3M7 24h3M7 36h3M7 48h3M7 60h3M6 72h5M7 84h3M7 96h3M7 108h3M7 132h3M7 144h3" stroke="#777"/>
                    <text class="rn-v" x="9" y="120" transform="rotate(-90 9 120)">1</text>
                  </svg>
                  <div class="gutter"></div>
                  <div class="docpage"><p class="doc-text">Document Editing on cryptpad<span class="caret"></span></p></div>
                  <div class="vscroll">
                    <span class="sb-thumb"></span>
                    <span class="sb-btn end"><i class="tri down"></i></span>
                  </div>
                </div>
                <div class="hscroll">
                  <span class="hb"><i class="tri left"></i></span>
                  <span class="h-thumb"><span class="grip"></span></span>
                  <span class="hb end"><i class="tri right"></i></span>
                </div>
              </div>
              <div class="rail right">
                <svg class="i"><use href="#pil"/></svg>
                <svg class="i dim"><use href="#table"/></svg>
                <svg class="i dim"><use href="#image"/></svg>
                <span class="more">···</span>
              </div>
            </div>

            <div class="oo-status">
              <span class="s-page">Page 1 of 1</span>
              <span class="s-cell s-word">
                <span class="wc-ic"><span class="wc-l"></span><span class="wc-l"></span><span class="wc-n">123</span></span>
                Word count
              </span>
              <span class="s-saved">All changes saved</span>
              <span class="s-cell s-lang">English<svg class="cv"><use href="#chev"/></svg><svg class="i"><use href="#globe"/></svg></span>
              <span class="s-cell s-track"><svg class="i"><use href="#track"/></svg><svg class="cv"><use href="#chev"/></svg></span>
              <span class="s-cell s-zoom">
                <svg class="i"><use href="#fit"/></svg>
                <svg class="i"><use href="#fitw"/></svg>
                <svg class="i"><use href="#minus"/></svg>
                <span class="s-z">Zoom 100%</span>
                <svg class="i"><use href="#plus"/></svg>
              </span>
            </div>
          </div>
          <aside class="userlist">
            <h3>Users</h3>
            <div class="ucard">
              <span class="uav"><svg width="24" height="24"><use href="#shell"/></svg></span>
              <span class="uname">Guest</span>
              <svg viewBox="0 0 14 14" width="14" height="14"><path d="M0.500 13.500 1.500 9.500 9 2l3 3-7.500 7.500zM10 1l1-1 3 3-1 1z" fill="#333"/></svg>
            </div>
          </aside>
        </div>
      </div>
    </div>
  </section>

  <!-- Dock -->
  <aside class="dock">
    <div class="d-item">
      <svg viewBox="0 0 44 46" width="44" height="46"><circle cx="22" cy="25" r="21" fill="url(#ffBase)"/><path d="M28 0c1 5 5 7 9 11 5 5 7 10 7 15-3-3-6-6-10-7-3-6-7-10-6-19z" fill="#ffd23a"/><path d="M5 12c3 2 6 3 9 2 5-3 12-1 15 3-5-2-11-1-14 3-3-1-7-2-10-8z" fill="#ff8a2a"/><circle cx="22" cy="25" r="10" fill="url(#ffBall)"/><path d="M12 19c4-3 10-4 15-1 2 1 3 3 5 6-5-3-9-5-13-4-3 0-5 0-7-1z" fill="#ffa52e"/></svg>
    </div>
    <div class="d-item run">
      <svg viewBox="0 0 46 42" width="44" height="40"><path d="M1 4a3 3 0 0 1 3-3h12l5 4h21a3 3 0 0 1 3 3v8H1z" fill="url(#folderB)"/><rect x="1" y="8" width="44" height="33" rx="4" fill="url(#folderF)"/><rect x="17" y="17" width="12" height="3" rx="1" fill="#eee"/></svg>
    </div>
    <div class="d-item run">
      <svg viewBox="0 0 38 44" width="38" height="44"><path d="M4 1h30l3 38a4 4 0 0 1-4 4H5a4 4 0 0 1-4-4z" fill="#f0692a"/><path d="M10 2c0 6 4 10 9 10s9-4 9-10" fill="none" stroke="#fff" stroke-width="1.500"/><text class="d-a" x="19" y="37" text-anchor="middle">A</text><path d="M6 31.500h26" stroke="#fff" stroke-width="1.800"/></svg>
    </div>
    <div class="d-item">
      <svg viewBox="0 0 46 46" width="46" height="46"><circle cx="23" cy="23" r="22.500" fill="url(#helpG)"/><text class="d-q" x="23" y="37" text-anchor="middle">?</text></svg>
    </div>
    <span class="d-sep"></span>
    <div class="d-item run">
      <svg viewBox="0 0 46 46" width="46" height="46"><path fill-rule="evenodd" d="M23 0c13 0 23 10 23 23S36 46 23 46 0 36 0 23 10 0 23 0zm0 5c-7 0-11 8-11 18s4 18 11 18 11-8 11-18S30 5 23 5z" fill="url(#opG)"/></svg>
    </div>
    <div class="d-item">
      <svg viewBox="0 0 46 46" width="46" height="46"><circle cx="23" cy="23" r="22.500" fill="#d6d6d6"/><path d="M23 23 4 10A22 22 0 0 1 14 3zM23 23 42 36A22 22 0 0 1 32 43z" fill="#f2f2f2"/><path d="M23 23 40 9A22 22 0 0 1 45 22zM23 23 6 37A22 22 0 0 1 1 24z" fill="#b9b9b9"/><circle cx="23" cy="23" r="8" fill="#eee" stroke="#b5a88f"/><circle cx="23" cy="23" r="3.500" fill="#555"/></svg>
    </div>
    <div class="d-item trash">
      <div class="trash-ic"><span class="bin-top"></span><span class="recycle">♻</span></div>
    </div>
    <svg class="ubuntu" viewBox="0 0 36 36" width="36" height="36"><circle cx="18" cy="18" r="15.500" fill="none" stroke="#eee" stroke-width="3"/><g fill="#4b4b4b"><circle cx="25" cy="5" r="7.500"/><circle cx="5" cy="16" r="7.500"/><circle cx="24.500" cy="29" r="7.500"/></g><g fill="#f5f5f5"><circle cx="25" cy="5" r="5"/><circle cx="5" cy="16" r="5"/><circle cx="24.500" cy="29" r="5"/></g></svg>
  </aside>
  <div class="tooltip">Trash</div>
</main>
</body>
</html>
```
FILE: styles.css
```css
* { box-sizing: border-box; }
html, body { margin: 0; padding: 0; }
body { width: 1280px; height: 800px; overflow: hidden; background: #000; font-family: "Noto Sans", sans-serif; color: #333; display: flex; flex-direction: column; }
.defs { position: absolute; }
svg { display: block; flex: none; }
button { font: inherit; border: 0; }
h1, h2, h3, p, figure { margin: 0; font-weight: normal; }
.sm-l { font: 700 7px "Liberation Sans", sans-serif; fill: #333; }

/* top bar */
.topbar { height: 32px; flex: none; background: #131313; display: flex; align-items: center; position: relative; color: #fff; }
.activities { display: flex; align-items: center; gap: 7px; padding-left: 15px; }
.pill { width: 29px; height: 8px; border-radius: 4px; background: #f4f4f4; }
.wsdot { width: 6px; height: 6px; border-radius: 50%; background: #888; }
.clock { position: absolute; left: 630px; top: 6px; font: 14px/18px "Noto Sans", sans-serif; color: #f2f2f2; }
.tray { margin-left: auto; display: flex; align-items: center; padding-right: 17px; }
.tray-vol { margin-left: 13px; }
.tray-pow { margin-left: 12px; }

/* desktop */
.desktop { position: relative; flex: 1; background: linear-gradient(100deg, #2c0822 0%, #3a0e2f 45%, #57213f 100%); overflow: hidden; }
.desktop::before { content: ""; position: absolute; left: 66px; top: 440px; width: 60px; height: 70px; background: linear-gradient(150deg, transparent 50%, #4a1a40 50%); }

/* app center */
.appcenter { position: absolute; left: 677px; top: 480px; right: 0; bottom: 0; background: #fff; padding: 31px 0 0 8px; }
.ac-title { font: 300 24px/30px "Noto Sans", sans-serif; color: #333; letter-spacing: -.3px; }
.warning { margin-top: 24px; width: 556px; height: 126px; background: #fdf3e5; border: 1px solid #f99b11; border-radius: 8px; display: flex; align-items: flex-start; padding: 10px 0 0 16px; }
.warn-icon { margin: 41px 0 0 0; }
.warn-body { margin-left: 15px; }
.warn-title { font: 600 15.500px/22px "Noto Sans", sans-serif; color: #222; }
.warn-text { font: 14.500px/20px "Lato", sans-serif; color: #4a4a4a; margin-top: 5px; white-space: nowrap; letter-spacing: .14px; }
.lnk { color: #2f95ea; text-decoration: underline; }
.lnk-in { letter-spacing: .2px; margin-left: 2px; }
.ac-actions { display: flex; align-items: center; margin-top: 24px; }
.installed { width: 135px; height: 36px; background: #e5e5e5; border-radius: 6px; color: #999; font: 14.500px "Lato", sans-serif; }
.ac-link { margin-left: 33px; font: 14.600px "Lato", sans-serif; letter-spacing: .1px; }

/* files */
.files { position: absolute; left: 0; top: 501px; width: 677px; bottom: 0; display: flex; background: #fff; border-top-right-radius: 12px; box-shadow: 0 0 8px rgba(0,0,0,.35); overflow: hidden; }
.f-side { width: 83px; flex: none; background: #f2f2f2; border-right: 1px solid #e0e0e0; display: flex; flex-direction: column; font: 14px "Noto Sans", sans-serif; color: #333; }
.f-side-top { height: 20px; margin-top: 13px; position: relative; }
.f-es { position: absolute; left: -9px; top: 0; font-weight: 600; }
.f-burger { position: absolute; left: 55px; top: 3px; width: 10px; height: 11px; border-top: 1px solid #555; border-bottom: 1px solid #555; }
.f-side-ents { margin-top: 141px; margin-left: -3px; height: 20px; font-size: 13px; line-height: 19px; }
.f-side-sel { margin-top: 10px; height: 36px; width: 77px; padding: 7px 0 0 0; background: #e5e5e5; border-radius: 0 6px 6px 0; text-indent: -3px; overflow: hidden; }
.f-main { flex: 1; min-width: 0; }
.f-head { height: 46px; display: flex; align-items: center; }
.f-back { margin-left: 19px; }
.f-fwd { margin-left: 32px; }
.f-path { margin-left: 37px; width: 248px; height: 34px; background: #f6f6f6; border-radius: 8px; display: flex; align-items: center; padding: 0 0 2px 13px; font: 700 14px "Noto Sans", sans-serif; color: #a8a8a8; }
.f-home { margin-left: 6px; }
.f-slash { margin-left: 14px; font-weight: 400; }
.f-dl { margin-left: 11px; }
.f-kebab { margin-left: 44px; width: 2px; height: 2px; border-radius: 50%; background: #aaa; box-shadow: 0 -4px 0 #aaa, 0 4px 0 #aaa; }
.f-find { margin-left: 14px; }
.f-list { margin-left: 42px; }
.f-sep { margin-left: 9px; width: 1px; height: 22px; background: #ddd; }
.f-dd { margin-left: 6px; }
.f-wbtn { margin-left: 13px; width: 24px; height: 24px; border-radius: 50%; background: #f3f3f3; display: flex; align-items: center; justify-content: center; }
.f-dd + .f-wbtn { margin-left: 16px; }
.f-file { margin: 25px 0 0 24px; width: 94px; display: flex; flex-direction: column; align-items: center; font: 14.800px/18.500px "Lato", sans-serif; text-align: center; color: #333; }
.f-file figcaption { margin-top: 6px; white-space: nowrap; }

/* opera */
.opera { position: absolute; left: 99px; top: 14px; right: 0; height: 487px; background: #d6e1ea; border-radius: 12px 12px 0 0; display: flex; padding: 6px 5px 5px 5px; box-shadow: 0 6px 16px rgba(0,0,0,.28); }
.op-side { width: 48px; background: #fff; border-radius: 10px; display: flex; flex-direction: column; align-items: center; flex: none; }
.op-logo { margin-top: 15px; }
.op-home { margin-top: 16px; width: 32px; height: 32px; background: #5118ff; border-radius: 8px; display: flex; align-items: center; justify-content: center; }
.op-star { margin-top: 15px; }
.op-tile { width: 32px; height: 32px; border-radius: 8px; background: #d4d5d7; display: flex; align-items: center; justify-content: center; margin-top: 8px; }
.op-tile.first { margin-top: 63px; }
.op-heart { margin-top: 50px; width: 22px; height: 22px; }
.op-clock { margin-top: 12px; }
.op-more { margin-top: 23px; width: 3px; height: 3px; border-radius: 50%; background: #333; box-shadow: -6px 0 0 #333, 6px 0 0 #333; }
.op-main { flex: 1; min-width: 0; margin-left: 4px; display: flex; flex-direction: column; }
.tabbar { height: 39px; flex: none; display: flex; align-items: flex-start; padding-top: 3px; }
.tab { width: 168px; height: 28px; background: #fff; border-radius: 5px; box-shadow: 0 2px 5px rgba(0,0,0,.22); display: flex; align-items: center; padding: 0 0 1px 6px; gap: 4px; overflow: hidden; }
.tab-title { font: 14px "Noto Sans", sans-serif; color: #444; white-space: nowrap; width: 138px; overflow: hidden; -webkit-mask-image: linear-gradient(90deg, #000 75%, transparent 100%); mask-image: linear-gradient(90deg, #000 75%, transparent 100%); }
.tab-plus { margin: 5px 0 0 8px; width: 18px; height: 18px; border-radius: 50%; background: #fff; display: flex; align-items: center; justify-content: center; }
.winctl { margin-left: auto; display: flex; gap: 20px; margin-top: 7px; margin-right: 10px; }
.addrrow { height: 39px; flex: none; display: flex; gap: 3px; }
.addr { width: 1074px; background: #fff; border-radius: 10px; display: flex; align-items: center; }
.nav-back { margin-left: 10px; }
.nav-fwd { margin-left: 29px; }
.nav-rel { margin-left: 20px; }
.nav-lock { margin-left: 22px; }
.url { margin: 0 0 2px 13px; font: 15.250px "Noto Sans", sans-serif; color: #657786; white-space: nowrap; }
.url-host { color: #333; }
.addr-icons { margin-left: auto; margin-right: 14px; display: flex; gap: 14px; }
.addr-icons svg { width: 16px; height: 16px; color: #333; }
.extbox { width: 43px; background: #fff; border-radius: 10px; display: flex; align-items: center; padding-left: 10px; }
.extbar { width: 5px; height: 24px; border-radius: 3px; background: #5118ff; margin-left: 7px; }
.page { margin-top: 4px; flex: 1; min-height: 0; background: #fff; border-radius: 8px; overflow: hidden; display: flex; flex-direction: column; font-family: "Open Sans", sans-serif; }
.cp-title { height: 34px; flex: none; display: flex; align-items: center; padding: 0 3px 0 6px; position: relative; }
.cp-w { font: 700 14px "Liberation Sans", sans-serif; fill: #4a7cc4; }
.cp-name { margin-left: 11px; font-size: 16px; color: #444; white-space: nowrap; }
.cp-pencil { margin-left: 11px; }
.cp-saved { margin-left: auto; margin-bottom: 2px; font-size: 14px; color: #444; }
.cp-bell { margin: 0 0 2px 60px; position: relative; }
.cp-badge { position: absolute; left: -13px; top: -8px; width: 19px; height: 19px; border-radius: 50%; background: #fff; border: 1px solid #333; font-size: 13px; line-height: 17px; text-align: center; color: #444; }
.cp-avatar { margin-left: 9px; width: 28px; height: 28px; }
.cp-tools { margin-top: 4px; height: 30px; flex: none; display: flex; padding: 0 5px; gap: 5px; }
.btn { height: 30px; background: #eee; border-radius: 4px; display: flex; align-items: center; gap: 7px; padding: 0 11px; font: 16px "Open Sans", sans-serif; color: #4a4a4a; }
.btn.blue { background: #c5d3e6; }
.share { margin-left: 317px; }
.access { width: 89px; gap: 6px; }
.up { margin-left: auto; width: 36px; justify-content: center; padding: 0; }
.chat { width: 79px; }
.users { width: 90px; border: 1px solid #333; border-radius: 4px; display: flex; align-items: center; padding-left: 10px; font-size: 16px; color: #444; gap: 4px; }
.u-eye { margin-left: 9px; margin-right: -2px; }
.cp-body { margin-top: 6px; flex: 1; min-height: 0; display: flex; }
.oo { width: 919px; flex: none; display: flex; flex-direction: column; font-family: "Liberation Sans", sans-serif; background: #f1f1f1; border-bottom-left-radius: 8px; overflow: hidden; }
.oo-head { height: 31px; flex: none; background: #446995; display: flex; align-items: center; color: #fff; font-size: 12px; }
.oo-logo { margin-left: 12px; }
.oo-brand { margin-left: 4px; font: 700 11px "Open Sans", sans-serif; letter-spacing: -.1px; width: 104px; }
.oo-tab { height: 27px; margin-top: 4px; line-height: 27px; padding: 0 12px; color: #fff; }
.oo-tab.t-file { margin-left: -14px; }
.oo-tab.active { background: #f1f1f1; color: #444; }
.oo-pen { width: 16px; height: 16px; margin-left: 146px; color: #dce5ee; }
.oo-editing { margin-left: 4px; font-size: 11px; color: #c9d6e4; }
.oo-search { width: 17px; height: 17px; margin-left: 20px; color: #dce5ee; }
.oo-user { margin-left: 21px; width: 20px; height: 20px; border-radius: 50%; background: #dce5ee; color: #446995; text-align: center; font-size: 11px; line-height: 20px; flex: none; }

.i { width: 20px; height: 20px; color: #333; }
.i.dis { color: #9a9a9a; }
.i.dim { color: #888; }
.cv { width: 11px; height: 22px; color: #555; }
.cv.w-chev { color: #dce5ee; margin-left: 2px; }
.oo-bar { height: 67px; flex: none; display: flex; border-bottom: 1px solid #cbcbcb; padding-top: 9px; }
.g { flex: none; }
.g-a { width: 41px; display: flex; flex-direction: column; align-items: center; gap: 8px; padding: 0 1px 0 0; height: 52px; border-right: 1px solid #cbcbcb; }
.g-b { width: 102px; height: 52px; padding: 1px 0 0 4px; display: grid; grid-template-columns: repeat(3, 31px); grid-auto-rows: 20px; row-gap: 8px; justify-items: center; border-right: 1px solid #cbcbcb; }
.g-c { width: 251px; height: 52px; padding-left: 7px; border-right: 1px solid #cbcbcb; display: flex; flex-direction: column; gap: 6px; }
.row { display: flex; align-items: center; height: 22px; }
.row1 { padding-left: 3px; }
.combo { height: 22px; background: #fff; border: 1px solid #cfcfcf; border-radius: 2px; display: flex; align-items: center; justify-content: space-between; padding-left: 3px; font-size: 11px; color: #444; }
.c-font { width: 105px; }
.c-size { width: 44px; margin-left: 3px; }
.tx { font: 13px "Liberation Sans", sans-serif; color: #333; }
.tx sup, .tx sub { font-size: 8px; line-height: 0; }
.tx-a { width: 22px; text-align: center; }
.tx-a:nth-of-type(3) { margin-left: 3px; }
.tx-a.small { font-size: 12px; }
.case { width: 25px; text-align: right; }
.cell { width: 24.500px; text-align: center; }
.bold { font-weight: 700; font-size: 14px; }
.ital { font: italic 14px "Liberation Serif", serif; }
.under { text-decoration: underline; }
.strike { text-decoration: line-through; }
.hl { width: 20px; height: 22px; position: relative; border-bottom: 3px solid #ffee00; overflow: hidden; }
.fc { width: 20px; height: 22px; text-align: center; line-height: 18px; border-bottom: 3px solid #000; margin-left: 2px; }
.erase { margin-left: 2px; }
.g-d { width: 238px; height: 52px; padding-left: 10px; display: grid; grid-template-columns: 20px 11px 20px 11px 20px 11px 20px 10px 20px 12px 20px 11px 20px 11px; grid-template-rows: 22px 22px; row-gap: 6px; align-items: center; }
.al-on { width: 20px; height: 20px; background: #7b8389; display: block; }
.al-on .i { color: #fff; }
.styles { width: 247px; height: 46px; margin-top: 2px; background: #fff; border: 1px solid #cfcfcf; border-radius: 2px; display: flex; font: 13.600px "Lato", sans-serif; color: #222; flex: none; }
.st { width: 108px; padding: 18px 0 0 21px; border-right: 1px solid #cfcfcf; }
.st.on { border: 2px solid #7f7f7f; padding-left: 10px; padding-top: 17px; }
.st + .st { width: 110px; padding-left: 13px; }
.st-more { flex: 1; display: flex; align-items: center; justify-content: center; }
.g-e { width: 40px; display: flex; flex-direction: column; align-items: center; gap: 8px; height: 52px; }
.oo-main { height: 197px; flex: none; display: flex; }
.rail { width: 40px; flex: none; display: flex; flex-direction: column; align-items: center; padding-top: 21px; gap: 18px; border-right: 1px solid #cbcbcb; }
.rail.right { border-right: 0; border-left: 1px solid #cbcbcb; }
.more { font-size: 14px; font-weight: 700; line-height: 20px; color: #444; }
.work { width: 839px; flex: none; background: #e2e2e2; display: flex; flex-direction: column; }
.ruler { flex: none; margin-left: -1px; }
.rn text { font: 10px "Liberation Sans", sans-serif; fill: #555; text-anchor: middle; }
.rn-v { font: 10px "Liberation Sans", sans-serif; fill: #555; }
.work-mid { height: 156px; flex: none; display: flex; }
.vruler { flex: none; }
.gutter { width: 22px; flex: none; border-right: 1px solid #c4c4c4; }
.docpage { width: 787px; flex: none; background: #fff; padding: 24px 0 0 94px; }
.doc-text { font: 13.600px/20px "Lato", sans-serif; color: #111; white-space: nowrap; display: flex; }
.caret { width: 1px; height: 17px; background: #000; margin: 1px 0 0 1px; }
.vscroll { flex: 1; display: flex; flex-direction: column; align-items: center; }
.sb-btn { width: 12px; height: 13px; background: #f1f1f1; border: 1px solid #d0d0d0; display: flex; align-items: center; justify-content: center; }
.sb-btn.end { margin-top: auto; margin-bottom: 1px; }
.sb-thumb { margin-top: 7px; width: 12px; height: 28px; background: #f1f1f1; border: 1px solid #d0d0d0; }
.tri { width: 0; height: 0; border: 4px solid transparent; display: block; }
.tri.down { border-top-color: #aaa; border-bottom: 0; }
.tri.left { border-right-color: #aaa; border-left: 0; }
.tri.right { border-left-color: #aaa; border-right: 0; }
.hscroll { height: 14px; flex: none; display: flex; align-items: center; padding: 0 15px 1px 1px; background: #e2e2e2; border-top: 1px solid #cfcfcf; }
.hb { width: 12px; height: 12px; background: #f1f1f1; border: 1px solid #d0d0d0; display: flex; align-items: center; justify-content: center; }
.h-thumb { width: 769px; margin-left: 1px; height: 12px; background: #f1f1f1; border: 1px solid #d0d0d0; display: flex; align-items: center; justify-content: center; }
.hb.end { margin-left: auto; }
.grip { width: 13px; height: 6px; background: repeating-linear-gradient(90deg, #b5b5b5 0 1px, transparent 1px 2px); }
.oo-status { flex: 1; min-height: 0; display: flex; align-items: center; border-top: 1px solid #cbcbcb; font-size: 11px; color: #444; }
.s-page { width: 73px; padding-left: 10px; height: 100%; line-height: 24px; border-right: 1px solid #cbcbcb; flex: none; white-space: nowrap; }
.s-cell { display: flex; align-items: center; height: 100%; flex: none; }
.s-word { margin-left: 9px; width: 100px; gap: 8px; white-space: nowrap; }
.wc-ic { width: 13px; display: flex; flex-direction: column; gap: 3px; }
.wc-l { height: 1px; background: #333; }
.wc-n { font-size: 6px; line-height: 6px; letter-spacing: -.2px; color: #222; }
.s-saved { margin-left: 130px; width: 244px; white-space: nowrap; }
.s-lang { width: 105px; padding-left: 13px; border-left: 1px solid #cbcbcb; border-right: 1px solid #cbcbcb; }
.s-lang .i { margin-left: 3px; }
.s-lang .cv { margin-left: 3px; }
.s-track { width: 50px; padding-left: 10px; border-right: 1px solid #cbcbcb; }
.s-zoom { padding-left: 10px; gap: 11px; }
.s-z { margin: 0 2px; width: 60px; white-space: nowrap; }
.userlist { flex: 1; padding: 20px 10px 0; text-align: center; }
.userlist h3 { font: 700 16px/22px "Open Sans", sans-serif; color: #444; }
.ucard { margin-top: 18px; height: 47px; background: #eee; border-right: 3px solid #d76fa5; border-radius: 4px; display: flex; align-items: center; padding-left: 5px; padding-right: 8px; }
.uav { width: 36px; height: 36px; background: #ddd; border-radius: 4px; display: flex; align-items: center; justify-content: center; }
.uname { margin: 0 0 2px 4px; flex: 1; text-align: left; font-size: 16px; color: #444; }

/* dock */
.dock { position: absolute; left: 0; top: 0; width: 66px; bottom: 0; background: rgba(20,20,20,.75); padding-top: 4px; display: flex; flex-direction: column; align-items: center; }
.d-item { width: 60px; height: 64px; display: flex; align-items: center; justify-content: center; position: relative; flex: none; }
.d-item.run::before { content: ""; position: absolute; left: 0; top: 29px; width: 5px; height: 5px; border-radius: 50%; background: #e95420; }
.d-sep { width: 48px; height: 1px; background: #5a5256; margin-top: 2px; flex: none; }
.trash { background: #372932; border-radius: 10px; height: 60px; margin-top: 2px; }
.trash-ic { width: 36px; height: 44px; border-radius: 4px; background: linear-gradient(#c4c4c4, #aeaeae); display: flex; flex-direction: column; align-items: center; }
.bin-top { width: 28px; height: 9px; margin-top: 2px; background: #f2f2f2; border: 1px solid #999; border-bottom: 2px solid #777; border-radius: 2px 2px 0 0; }
.recycle { font: 26px/26px "DejaVu Sans", sans-serif; color: #2d8a2d; margin-top: 3px; }
.d-a { font: 700 28px "Liberation Sans", sans-serif; fill: #fff; }
.d-q { font: 300 38px "Lato", sans-serif; fill: #fff; }
.ubuntu { position: absolute; left: 15px; bottom: 17px; }
.tooltip { position: absolute; left: 69px; top: 407px; width: 62px; height: 32px; border-radius: 16px; background: #222; border: 1px solid #4a4a4a; color: #eee; font: 14px/30px "Noto Sans", sans-serif; text-align: center; }
```
